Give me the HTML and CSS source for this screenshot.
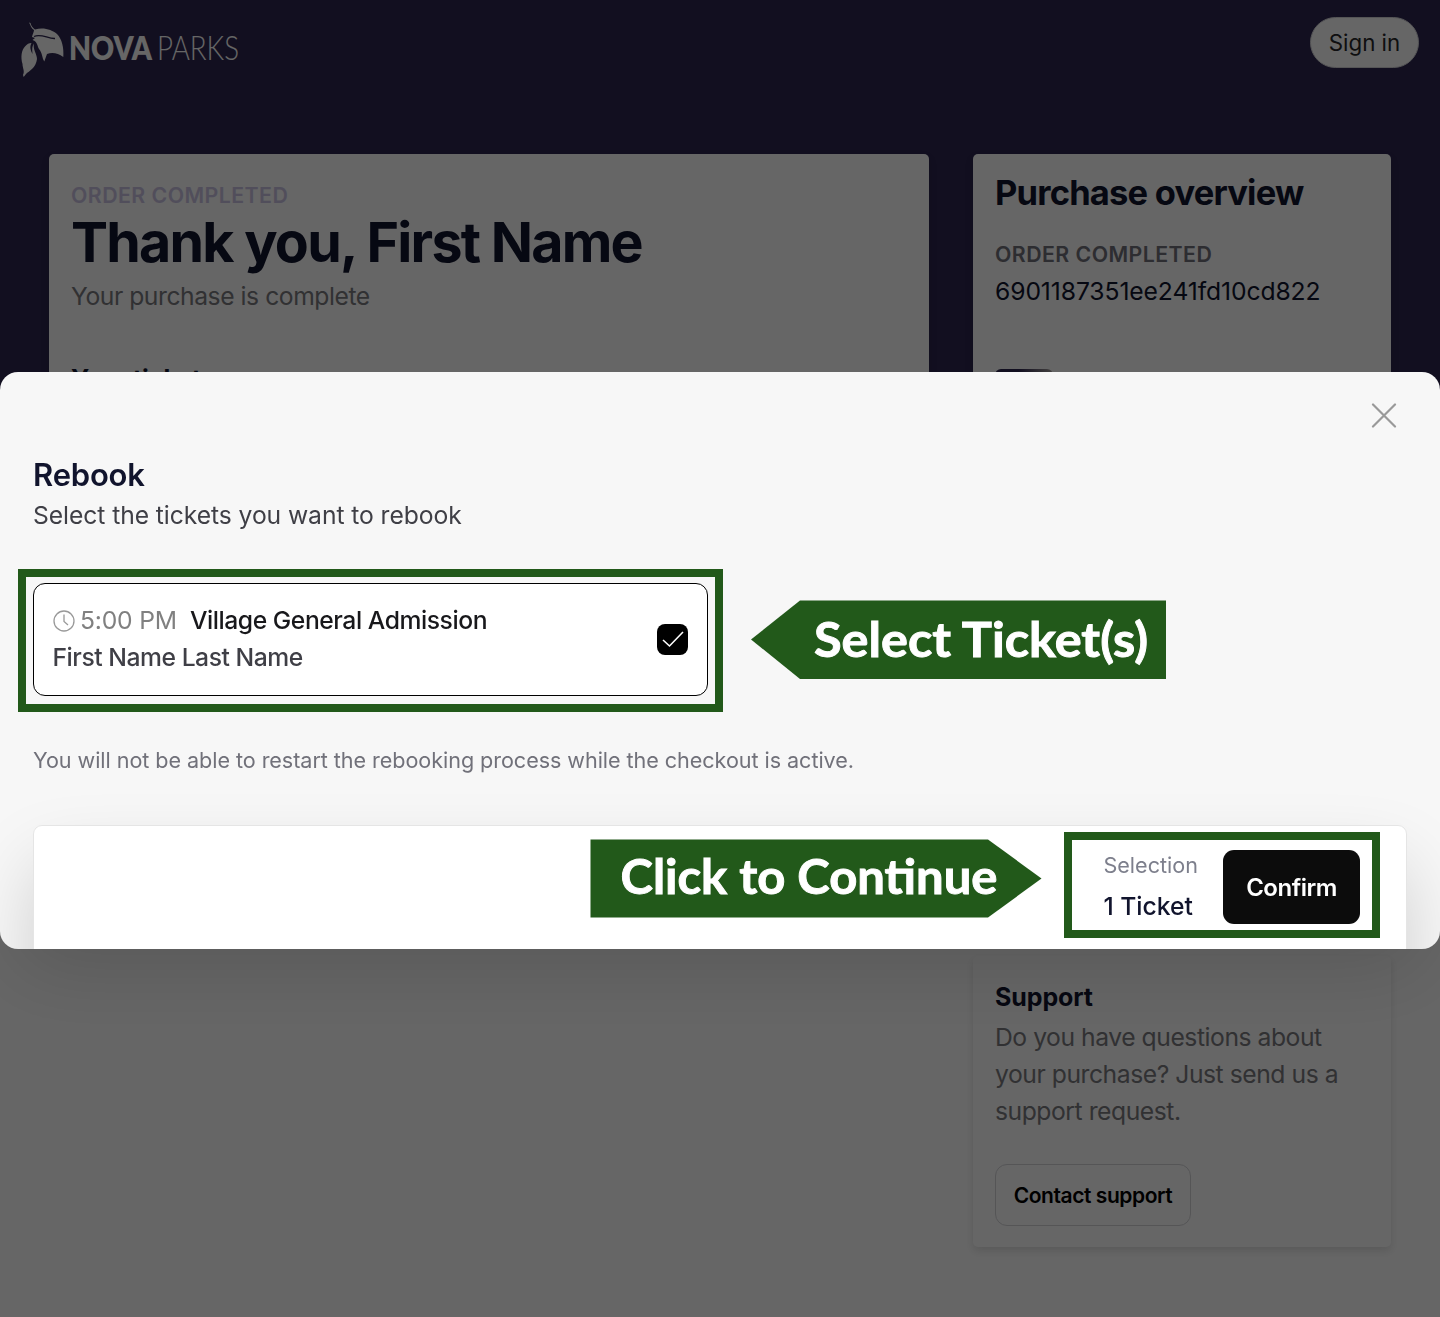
FILE: index.html
```html
<!DOCTYPE html>
<html lang="en">
<head>
	<meta charset="utf-8">
	<title>NOVA Parks</title>
	<link rel="stylesheet" href="styles.css">
</head>
<body>

<div class="page">
	<header>
		<svg class="logo" width="260" height="64" viewBox="0 0 260 64">
			<path d="M9 1.5 L10.5 2 C11 5 13 7 15 8.5 C24 6 32 9 37 13 C42 18 44 27 43.3 36 C38 32 32 31 27 33 L24.3 40.5 C22 37 22.5 32 19 28 C17 25 18 21 12.5 19 L15 17 L12 16 C12.5 13 14 11 14 9 C11 7 11 5 9 1.5 Z"/>
			<path d="M11.5 22 C9.5 26 10.5 29 12.5 33 C12 28 12 25 14 22.5 C12.5 28 17 33 17 38 C16 47 9 50 6 53 L3.7 56 L3 54 C5 50 2.5 47 2.5 43 C0.5 36 1.5 29 5 25.5 C7 23 9 22 11.5 22 Z"/>
			<path class="vein" d="M14 15.5 C21 12 28 18 35 17.5"/>
			<text class="nova" x="49" y="39" textLength="83" lengthAdjust="spacingAndGlyphs">NOVA</text>
			<text class="parks" x="137" y="39" textLength="82" lengthAdjust="spacingAndGlyphs">PARKS</text>
		</svg>
		<a href="#" class="signin">Sign in</a>
	</header>

	<main>
		<div class="card order">
			<p class="label">ORDER COMPLETED</p>
			<h1>Thank you, First Name</h1>
			<p class="text">Your purchase is complete</p>
			<h3>Your tickets</h3>
		</div>
		<aside>
			<div class="card overview">
				<h2>Purchase overview</h2>
				<p class="label">ORDER COMPLETED</p>
				<p class="number">6901187351ee241fd10cd822</p>
				<div class="thumb"></div>
			</div>
			<div class="card support">
				<h3>Support</h3>
				<p class="text">Do you have questions about your purchase? Just send us a support request.</p>
				<a href="#" class="contact">Contact support</a>
			</div>
		</aside>
	</main>
</div>

<div class="overlay"></div>

<div class="modal">
	<a href="#" class="close">
		<svg width="26" height="26" viewBox="0 0 26 26"><path d="M2 2.5 L24 24.5 M24 2.5 L2 24.5"/></svg>
	</a>
	<h2>Rebook</h2>
	<p class="subtitle">Select the tickets you want to rebook</p>

	<div class="ticket">
		<div class="info">
			<div class="row">
				<svg class="clock" width="22" height="22" viewBox="0 0 22 22"><circle cx="11" cy="11" r="10"/><path d="M11 4.5 V11.5 L15 15"/></svg>
				<span class="time">5:00 PM</span>
				<span class="product">Village General Admission</span>
			</div>
			<div class="name">First Name Last Name</div>
		</div>
		<div class="check">
			<svg width="31" height="31" viewBox="0 0 31 31"><path d="M6 16 L12.5 22 L26 8"/></svg>
		</div>
	</div>

	<p class="note">You will not be able to restart the rebooking process while the checkout is active.</p>

	<div class="footer">
		<div class="selection">
			<div class="caption">Selection</div>
			<div class="count">1 Ticket</div>
		</div>
		<button class="confirm">Confirm</button>
	</div>

	<!-- guide marks over the dialog -->
	<div class="frame frame-ticket"></div>
	<div class="frame frame-confirm"></div>
	<svg class="arrow arrow-select" width="415" height="79" viewBox="0 0 415 79">
		<polygon points="0,39.5 49,0.5 415,0.5 415,79 49,79"/>
		<text x="63" y="56.5" textLength="334" lengthAdjust="spacingAndGlyphs">Select Ticket(s)</text>
	</svg>
	<svg class="arrow arrow-click" width="452" height="79" viewBox="0 0 452 79">
		<polygon points="0.5,0.5 398,0.5 451.5,39.5 398,78.5 0.5,78.5"/>
		<text x="30.5" y="55" textLength="377" lengthAdjust="spacingAndGlyphs">Click to Continue</text>
	</svg>
</div>

</body>
</html>
```
FILE: styles.css
```css
*{
	margin: 0;
	padding: 0;
	box-sizing: border-box;
}

body{
	font-family: Inter, "Liberation Sans", sans-serif;
	font-size: 24.7px;
	line-height: 37px;
	color: #11142d;
	background: #fff;
	overflow: hidden;
}

a{
	color: inherit;
	text-decoration: none;
}

.page{
	height: 1317px;
	background: linear-gradient(#2d2650 600px, #fff 600px);
}

header{
	display: flex;
	justify-content: space-between;
	align-items: flex-start;
	height: 154px;
	padding: 17px 21px 0 20px;
}

.logo{
	margin-top: 4px;
	fill: #fff;
	font-family: Lato, sans-serif;
	font-size: 32.5px;
}

.vein{
	fill: none;
	stroke: #2d2650;
	stroke-width: 1.3;
}

.nova{
	font-weight: 800;
}

.parks{
	font-weight: 300;
}

.signin{
	width: 109px;
	height: 51px;
	border: 1px solid #d4d4d8;
	border-radius: 26px;
	background: #fff;
	color: #27272a;
	font-size: 22.3px;
	line-height: 49px;
	text-align: center;
}

main{
	display: grid;
	grid-template-columns: 880px 418px;
	gap: 44px;
	padding-left: 49px;
}

.card{
	padding: 22px;
	background: #fff;
	border-radius: 5px;
	box-shadow: 0 4px 8px rgba(0,0,0,.12);
}

.order{
	height: 700px;
}

.label{
	font-size: 21.3px;
	font-weight: 600;
	line-height: 32px;
	letter-spacing: .45px;
	color: #71717a;
}

.order .label{
	margin-top: 3px;
	color: #cbc4e4;
}

h1{
	font-size: 55.5px;
	line-height: 62px;
	letter-spacing: -1.75px;
}

.order .text{
	margin-top: 5px;
}

.text{
	color: #7b7b80;
	letter-spacing: -.46px;
}

.order h3{
	margin-top: 46px;
}

h3{
	font-size: 25px;
	font-weight: 700;
	letter-spacing: -.1px;
}

.overview{
	height: 758px;
}

.overview h2{
	font-size: 34.5px;
	line-height: 34px;
	letter-spacing: -.8px;
}

.overview .label{
	margin-top: 28px;
}

.number{
	margin-top: 3px;
	letter-spacing: -.11px;
}

.thumb{
	width: 58px;
	height: 58px;
	margin-top: 59px;
	border-radius: 6px;
	background: linear-gradient(90deg, #2d2650 40%, #a9a3a0);
}

.support{
	height: 291px;
	margin-top: 44px;
	padding-top: 23px;
}

.support .text{
	margin-top: 3px;
}

.contact{
	display: block;
	width: 196px;
	height: 62px;
	margin-top: 34px;
	border: 1px solid #d4d4d8;
	border-radius: 12px;
	color: #000;
	font-size: 21px;
	font-weight: 600;
	letter-spacing: -.43px;
	line-height: 61px;
	text-align: center;
}

.overlay{
	position: fixed;
	inset: 0;
	background: rgba(0,0,0,.6);
}

/* overflow clips the white bar and its shadow at the rounded bottom */
.modal{
	position: fixed;
	top: 372px;
	left: 0;
	width: 1440px;
	height: 576.5px;
	padding: 84px 33px 0;
	background: #f7f7f7;
	border-radius: 18px;
	box-shadow: 0 38px 76px -18px rgba(0,0,0,.14);
	overflow: hidden;
}

.close{
	position: absolute;
	top: 30px;
	right: 43px;
	height: 26px;
	line-height: 0;
}

.close path{
	fill: none;
	stroke: #999;
	stroke-width: 2.2;
	stroke-linecap: round;
}

.modal h2{
	font-size: 31px;
	font-weight: 600;
	line-height: 38px;
	letter-spacing: -.2px;
}

.subtitle{
	margin-top: 3px;
	color: #3f3f46;
	letter-spacing: -.08px;
}

.ticket{
	display: flex;
	justify-content: space-between;
	align-items: center;
	width: 675px;
	height: 113px;
	margin-top: 49px;
	padding: 0 19px 0 18.5px;
	background: #fff;
	border: 1.5px solid #000;
	border-radius: 12px;
}

.info{
	margin-top: -1px;
}

.row{
	display: flex;
	align-items: center;
}

.clock{
	fill: none;
	stroke: #999;
	stroke-width: 1.3;
}

.time{
	margin: 0 13px 0 5.5px;
	color: #808080;
	letter-spacing: -.2px;
}

.product{
	color: #18181b;
	font-weight: 500;
	letter-spacing: -.45px;
}

.name{
	color: #3f3f46;
	font-weight: 500;
	letter-spacing: -.47px;
}

.check{
	height: 31px;
	background: #000;
	border-radius: 8px;
}

.check svg{
	display: block;
	fill: none;
	stroke: #fff;
	stroke-width: 1.6;
}

.note{
	margin-top: 48px;
	color: #71717a;
	font-size: 21.6px;
	line-height: 32px;
	letter-spacing: -.06px;
}

.footer{
	display: flex;
	justify-content: flex-end;
	height: 160px;
	margin-top: 49px;
	padding: 24px 46px 0 0;
	background: #fff;
	border: 1px solid #e5e5e5;
	border-radius: 9px 9px 0 0;
	box-shadow: 0 38px 76px -4px rgba(0,0,0,.18);
}

.caption{
	margin-top: -1px;
	font-size: 21.6px;
	line-height: 32px;
	color: #7d7f8c;
}

.count{
	margin-top: 7px;
	font-weight: 500;
}

.confirm{
	width: 137px;
	height: 74px;
	margin-left: 25px;
	border: 0;
	border-radius: 11px;
	background: #0c0c0c;
	color: #fff;
	font: 600 24px Inter, sans-serif;
	letter-spacing: -.5px;
}

.frame{
	position: absolute;
	border: 8px solid #22591a;
}

.frame-ticket{
	top: 197px;
	left: 18px;
	width: 705px;
	height: 143px;
}

.frame-confirm{
	top: 460px;
	left: 1064px;
	width: 316px;
	height: 106px;
}

.arrow{
	position: absolute;
	fill: #22591a;
}

.arrow text{
	fill: #fff;
	stroke: #fff;
	stroke-width: .9;
	font-family: Lato, sans-serif;
	font-size: 47px;
	font-weight: 700;
}

.arrow-select{
	top: 228px;
	left: 751px;
}

.arrow-click{
	top: 467px;
	left: 590px;
}
```
